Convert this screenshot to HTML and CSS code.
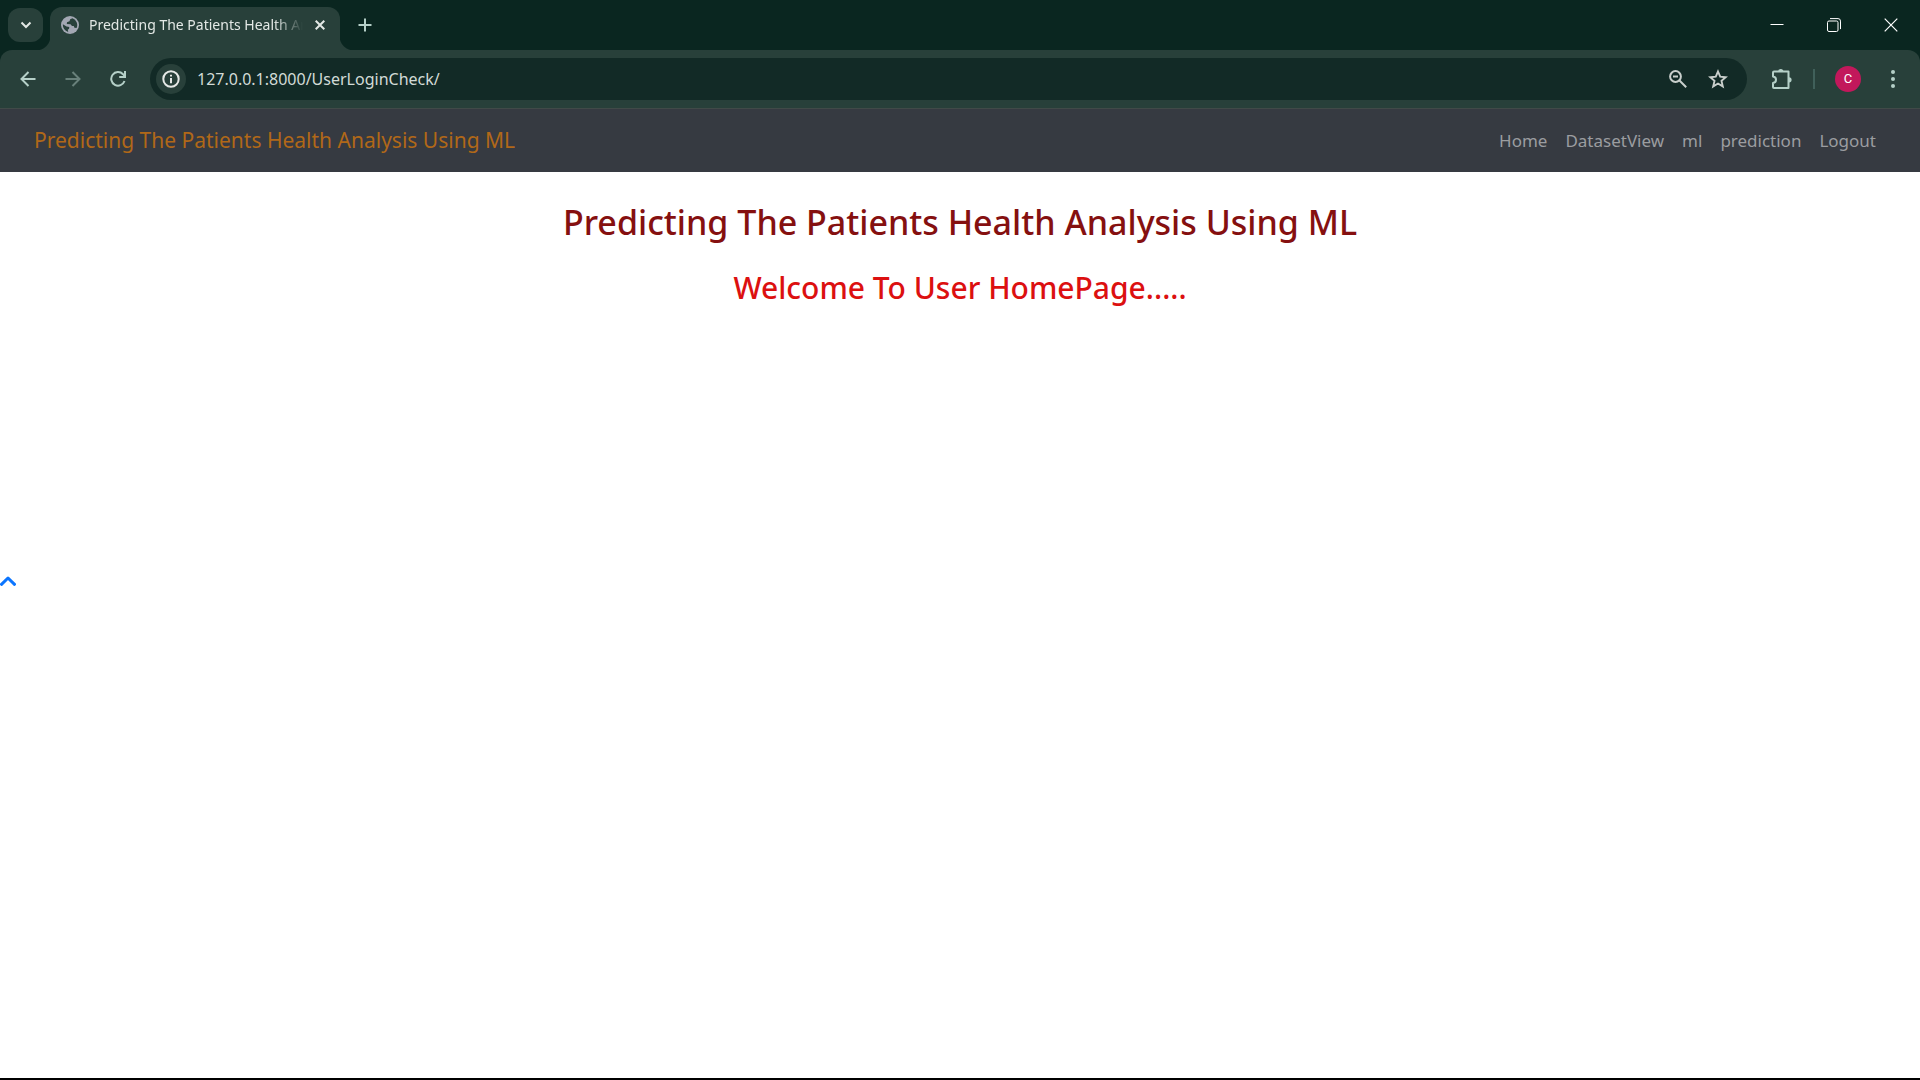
FILE: index.html
```html
<!DOCTYPE html>
<html lang="en">
<head>
<meta charset="utf-8">
<title>Predicting The Patients Health Analysis Using ML</title>
<link rel="stylesheet" href="styles.css">
</head>
<body>
<header class="browser">
  <div class="tab-strip">
    <button class="tab-search" type="button" aria-label="Search tabs">
      <svg width="12" height="8" viewBox="0 0 12 8"><path d="M1.500 1.500 6 6l4.500-4.500" fill="none" stroke="currentColor" stroke-width="2"/></svg>
    </button>
    <div class="tab">
      <svg class="tab-globe" width="18" height="18" viewBox="0 0 18 18"><circle cx="9" cy="9" r="9" fill="#a3a7b3"/><path d="M11.500 2.300 9.200 3.300 8.500 5.200 6 6.200 5.800 8 9.500 8.300 11 10l1.800 0 .6 1.800 2.200.2A7.200 7.200 0 0 0 11.500 2.300zM1.900 8.200 5.500 10.500 8.300 11 8 13 6.800 13.500 7.200 16A7.200 7.200 0 0 1 1.900 8.200z" fill="#28403a"/></svg>
      <span class="tab-title">Predicting The Patients Health Analysis</span>
      <button class="tab-close" type="button" aria-label="Close tab">
        <svg width="10" height="10" viewBox="0 0 10 10"><path d="M.7.7l8.600 8.600M9.300.7.7 9.300" stroke="currentColor" stroke-width="2"/></svg>
      </button>
    </div>
    <button class="new-tab" type="button" aria-label="New tab">
      <svg width="14" height="14" viewBox="0 0 14 14"><path d="M7 .5v13M.5 7h13" stroke="currentColor" stroke-width="2"/></svg>
    </button>
    <div class="window-controls">
      <button type="button" aria-label="Minimize"><svg width="14" height="14" viewBox="0 0 14 14"><path d="M.5 6.500h13" stroke="currentColor"/></svg></button>
      <button type="button" aria-label="Restore"><svg width="14" height="14" viewBox="0 0 14 14" fill="none" stroke="currentColor"><rect x=".5" y="3" width="10.500" height="10.500" rx="1.500"/><path d="M3 .6h8a2.500 2.500 0 0 1 2.500 2.500v8"/></svg></button>
      <button type="button" aria-label="Close"><svg width="14" height="14" viewBox="0 0 14 14"><path d="M.7.7l12.600 12.600M13.300.7.7 13.300" stroke="currentColor" stroke-width="1.200"/></svg></button>
    </div>
  </div>
  <div class="toolbar">
    <button class="tool" type="button" aria-label="Back"><svg width="16" height="16" viewBox="0 0 16 16" fill="none" stroke="currentColor" stroke-width="2"><path d="M15.500 8H2M8.500 1 1.500 8l7 7"/></svg></button>
    <button class="tool tool-off" type="button" aria-label="Forward"><svg width="16" height="16" viewBox="0 0 16 16" fill="none" stroke="currentColor" stroke-width="2"><path d="M.5 8H14M7.500 1l7 7-7 7"/></svg></button>
    <button class="tool" type="button" aria-label="Reload"><svg width="16" height="16" viewBox="0 0 16 16" fill="none" stroke="currentColor" stroke-width="2"><path d="M14.500 10A6.800 6.800 0 1 1 13 3.200L15 5.500M15 0v6H9.200"/></svg></button>
    <div class="address">
      <button class="site-info" type="button" aria-label="View site information"><svg width="18" height="18" viewBox="0 0 18 18"><circle cx="9" cy="9" r="7.700" fill="none" stroke="currentColor" stroke-width="2"/><path d="M8 4.800h2v1.800H8zM8 8h2v5.200H8z" fill="currentColor"/></svg></button>
      <input class="url" type="text" aria-label="Address" value="127.0.0.1:8000/UserLoginCheck/">
      <button class="address-action" type="button" aria-label="Zoom"><svg width="18" height="18" viewBox="0 0 18 18" fill="none" stroke="currentColor" stroke-width="2"><circle cx="6.500" cy="6.500" r="5.400"/><path d="M10.500 10.500l6.700 6.700M4 6.500h5"/></svg></button>
      <button class="address-action" type="button" aria-label="Bookmark this tab"><svg width="20" height="20" viewBox="0 0 20 20"><path d="M10 2.500l2.200 5.200 5.500.5-4.200 3.700 1.300 5.500L10 14.500l-4.800 2.900 1.300-5.500L2.300 8.200l5.500-.5z" fill="none" stroke="currentColor" stroke-width="1.900"/></svg></button>
    </div>
    <button class="extensions" type="button" aria-label="Extensions"><svg width="22" height="22" viewBox="0 0 22 22"><path d="M3 3.500h14.500v16.500H3q-1 0-1-1V15c4-.5 4-6 0-6.500V4.500q0-1 1-1z" fill="none" stroke="currentColor" stroke-width="2" stroke-linejoin="round"/><path d="M7.200 3.500a2.600 2.600 0 0 1 5.200 0zM18 9.200a2.600 2.600 0 0 1 0 5.200z" fill="currentColor"/></svg></button>
    <span class="divider"></span>
    <button class="avatar" type="button" aria-label="Profile">C</button>
    <button class="menu" type="button" aria-label="Menu"><svg width="4" height="18" viewBox="0 0 4 18" fill="currentColor"><circle cx="2" cy="2" r="2"/><circle cx="2" cy="9" r="2"/><circle cx="2" cy="16" r="2"/></svg></button>
  </div>
</header>
<nav class="navbar">
  <a class="brand" href="#">Predicting The Patients Health Analysis Using ML</a>
  <ul class="nav-links">
    <li><a href="#">Home</a></li>
    <li><a href="#">DatasetView</a></li>
    <li><a href="#">ml</a></li>
    <li><a href="#">prediction</a></li>
    <li><a href="#">Logout</a></li>
  </ul>
</nav>
<main class="content">
  <h1>Predicting The Patients Health Analysis Using ML</h1>
  <h2>Welcome To User HomePage.....</h2>
  <a class="to-top" href="#" aria-label="Back to top"><svg width="16" height="10" viewBox="0 0 16 10"><path d="M1.500 8.300 8 2l6.500 6.300" fill="none" stroke="currentColor" stroke-width="3" stroke-linecap="round" stroke-linejoin="round"/></svg></a>
</main>
</body>
</html>
```
FILE: styles.css
```css
* { box-sizing: border-box; }

body {
  margin: 0;
  min-height: 100vh;
  border-bottom: 2px solid #000;
  background: #fff;
  font-family: "Segoe UI", "Noto Sans", "Open Sans", sans-serif;
}

svg { display: block; flex: none; }
a { text-decoration: none; }

button {
  display: flex;
  flex: none;
  align-items: center;
  justify-content: center;
  padding: 0;
  border: 0;
  background: none;
  color: inherit;
  font: inherit;
}

.browser {
  background: #0a2620;
  color: #e3e8e5;
}

.tab-strip {
  display: flex;
  height: 50px;
  padding-left: 8px;
}

.tab-search {
  width: 35px;
  height: 34px;
  margin: 8px 7px 0 0;
  border-radius: 12px;
  background: #28403a;
}

.tab {
  position: relative;
  display: flex;
  align-items: center;
  width: 290px;
  margin-top: 7px;
  padding: 0 9px 8px 11px;
  border-radius: 12px 12px 0 0;
  background: #28403a;
}

.tab::before,
.tab::after {
  content: "";
  position: absolute;
  bottom: 0;
  width: 14px;
  height: 14px;
}

.tab::before {
  right: 100%;
  background: radial-gradient(circle at 0 0, transparent 14px, #28403a 15px);
}

.tab::after {
  left: 100%;
  background: radial-gradient(circle at 100% 0, transparent 14px, #28403a 15px);
}

.tab-title {
  flex: 1;
  min-width: 0;
  margin-left: 10px;
  overflow: hidden;
  white-space: nowrap;
  font-size: 14px;
  line-height: 20px;
  mask-image: linear-gradient(to right, #000 185px, transparent 214px);
}

.tab-close { width: 22px; height: 22px; }

.new-tab {
  width: 34px;
  margin-left: 8px;
  color: #b5d0c8;
}

.window-controls {
  display: flex;
  margin-left: auto;
  padding-right: 1px;
}

.window-controls button { width: 57px; color: #fff; }

.toolbar {
  display: flex;
  align-items: center;
  height: 59px;
  padding: 0 15px 0 6px;
  border-bottom: 1px solid #414a48;
  border-radius: 12px 12px 0 0;
  background: #28403a;
  color: #b5d0c8;
}

.tool {
  width: 43px;
  height: 36px;
  margin-right: 2px;
}

.tool-off { color: #68807a; }

.address {
  display: flex;
  flex: 1;
  align-items: center;
  height: 42px;
  margin-left: 9px;
  padding: 0 19px 0 6px;
  border-radius: 21px;
  background: #122a26;
  color: #c9cfcc;
}

.site-info {
  width: 30px;
  height: 30px;
  border-radius: 50%;
  background: #28403a;
  color: #e6e9e7;
}

.url {
  flex: 1;
  min-width: 0;
  padding: 0 11px;
  border: 0;
  outline: 0;
  background: none;
  color: #d2dbd7;
  font-family: inherit;
  font-size: 16px;
  line-height: 24px;
}

.address-action { width: 20px; height: 30px; margin-left: 20px; }
.extensions { width: 22px; height: 36px; margin-left: 24px; }

.divider {
  width: 2px;
  height: 20px;
  margin: 0 20px;
  background: #40605a;
}

.avatar {
  width: 26px;
  height: 26px;
  border-radius: 50%;
  background: #c2185b;
  color: #fff;
  font: 13px/26px Roboto, sans-serif;
}

.menu { width: 24px; height: 36px; margin-left: 20px; }

.navbar {
  display: flex;
  align-items: center;
  justify-content: space-between;
  padding: 14px 44px 14px 34px;
  background: #363a41;
}

.brand {
  color: #b16818;
  font-size: 21px;
  line-height: 35px;
}

.nav-links {
  display: flex;
  gap: 18px;
  margin: 0;
  padding: 0;
  list-style: none;
  font-size: 17px;
  line-height: 26px;
}

.nav-links a { color: #9b9da0; }

.content h1,
.content h2 {
  margin: 0;
  text-align: center;
  font-weight: 500;
}

.content h1 {
  padding-top: 28px;
  color: #851010;
  font-size: 34px;
  line-height: 44px;
}

.content h2 {
  padding-top: 24px;
  color: #dc1010;
  font-size: 30px;
  line-height: 40px;
}

.to-top {
  display: inline-block;
  margin-top: 268px;
  color: #0b75ff;
}
```
